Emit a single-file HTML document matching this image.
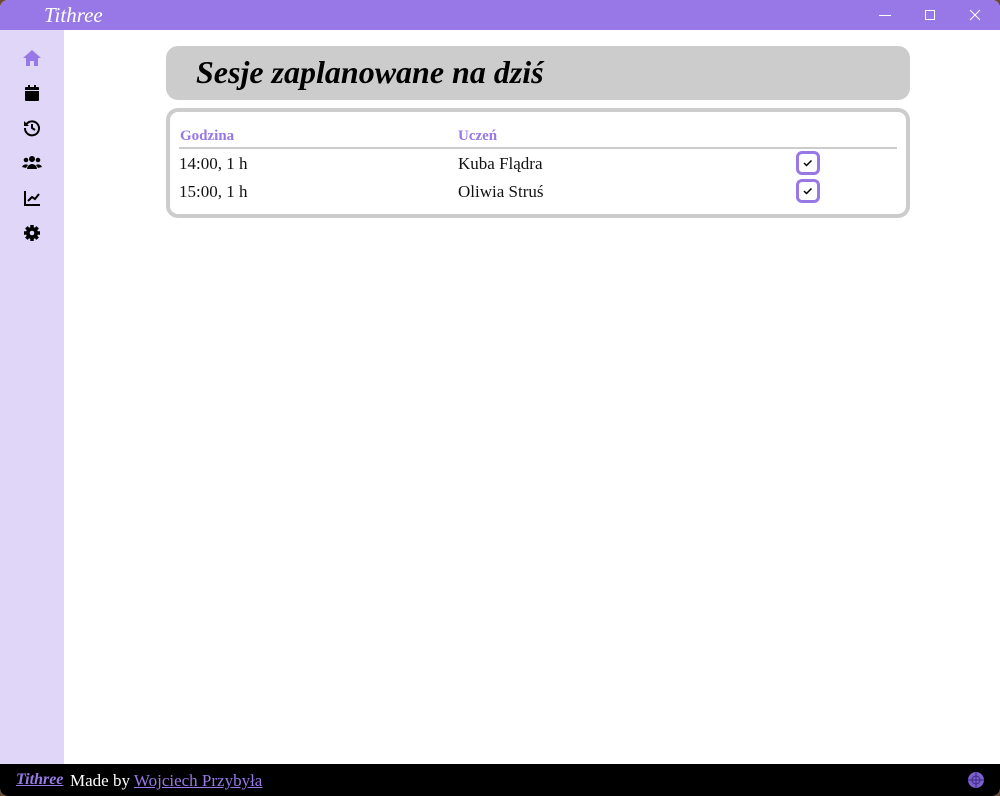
<!DOCTYPE html>
<html><head><meta charset="utf-8"><style>
*{margin:0;padding:0;box-sizing:border-box}
body{width:1000px;height:796px;background:#6b4a32;overflow:hidden;font-family:"Liberation Serif",serif;position:relative}
.win{position:absolute;left:0;top:0;width:1000px;height:796px;border-radius:8px;overflow:hidden;background:#fff}
.title{position:absolute;left:0;top:0;width:1000px;height:30px;background:#9878e6}
.title .t{position:absolute;left:44px;top:3px;color:#fff;font-style:italic;font-size:21px;font-family:"Liberation Serif",serif}
.side{position:absolute;left:0;top:30px;width:64px;height:734px;background:#e0d6f8}
.ic{position:absolute;left:22px;width:20px;height:20px}
.foot{position:absolute;left:0;top:764px;width:1000px;height:32px;background:#000;color:#fff;font-size:17px}
.head{position:absolute;left:166px;top:46px;width:744px;height:54px;background:#ccc;border-radius:12px}
.head span{position:absolute;left:30px;top:8px;font-size:32px;font-style:italic;font-weight:bold;color:#000}
.tbl{position:absolute;left:166px;top:108px;width:744px;height:110px;border:4px solid #ccc;border-radius:12px}
.tx{position:absolute;font-size:17px;color:#111}
.th{color:#9878e6;font-weight:bold;font-size:15px}
.line{position:absolute;left:9px;top:35px;width:718px;height:2px;background:#ccc}
.cb{position:absolute;left:626px;width:24px;height:24px;border:3px solid #9878e6;border-radius:6px}
</style></head><body><div class="win">
<div class="title"><span class="t">Tithree</span>
<svg style="position:absolute;left:878px;top:9px" width="14" height="12"><path d="M1 6.5H13" stroke="#fff" stroke-width="1"/></svg>
<svg style="position:absolute;left:924px;top:9px" width="12" height="12"><rect x="1.5" y="1.5" width="9" height="9" fill="none" stroke="#fff"/></svg>
<svg style="position:absolute;left:969px;top:9px" width="12" height="12"><path d="M1 1L11 11M11 1L1 11" stroke="#fff"/></svg>
</div>
<div class="side">
<svg class="ic" style="top:18px" viewBox="0 0 20 20"><path d="M10 2L1 10h3v8h4v-5h4v5h4v-8h3z" fill="#9878e6"/></svg>
<svg class="ic" style="top:53px" viewBox="0 0 20 20"><rect x="3" y="4" width="14" height="14" rx="1" fill="#000"/><rect x="6" y="2" width="2" height="4" fill="#000"/><rect x="12" y="2" width="2" height="4" fill="#000"/><rect x="3" y="7" width="14" height="1" fill="#e0d6f8"/></svg>
<svg class="ic" style="top:88px" viewBox="0 0 20 20"><path d="M4.5 6A7 7 0 1 1 3 10" fill="none" stroke="#000" stroke-width="2"/><path d="M2 3v5h5z" fill="#000"/><path d="M10 6v4l3 2" fill="none" stroke="#000" stroke-width="2"/></svg>
<svg class="ic" style="top:123px" viewBox="0 0 20 20"><circle cx="10" cy="6" r="3" fill="#000"/><circle cx="4" cy="7" r="2.3" fill="#000"/><circle cx="16" cy="7" r="2.3" fill="#000"/><path d="M5 16a5 5 0 0 1 10 0z" fill="#000"/><path d="M0 14a4 3.5 0 0 1 6-2l-2 3z M20 14a4 3.5 0 0 0-6-2l2 3z" fill="#000"/></svg>
<svg class="ic" style="top:158px" viewBox="0 0 20 20"><path d="M3 3v14h15" fill="none" stroke="#000" stroke-width="2"/><path d="M6 13l4-4 3 2 4-5" fill="none" stroke="#000" stroke-width="2"/></svg>
<svg class="ic" style="top:193px" viewBox="0 0 20 20"><circle cx="10" cy="10" r="6" fill="#000"/><g stroke="#000" stroke-width="3.5"><path d="M10 2v16M2 10h16M4.3 4.3l11.4 11.4M15.7 4.3L4.3 15.7"/></g><circle cx="10" cy="10" r="2.3" fill="#e0d6f8"/></svg>
</div>
<div class="head"><span>Sesje zaplanowane na dziś</span></div>
<div class="tbl">
<div class="tx th" style="left:10px;top:16px">Godzina</div>
<div class="tx th" style="left:288px;top:16px">Uczeń</div>
<div class="line"></div>
<div class="tx" style="left:9px;top:42px">14:00, 1 h</div>
<div class="tx" style="left:288px;top:42px">Kuba Flądra</div>
<div class="tx" style="left:9px;top:70px">15:00, 1 h</div>
<div class="tx" style="left:288px;top:70px">Oliwia Struś</div>
<div class="cb" style="top:39px"><svg width="18" height="18" style="position:absolute;left:0;top:0"><path d="M5 9l2.5 2.5L12.5 6.5" fill="none" stroke="#000" stroke-width="1.5"/></svg></div>
<div class="cb" style="top:67px"><svg width="18" height="18" style="position:absolute;left:0;top:0"><path d="M5 9l2.5 2.5L12.5 6.5" fill="none" stroke="#000" stroke-width="1.5"/></svg></div>
</div>
<div class="foot">
<span style="position:absolute;left:16px;top:7px;color:#9878e6;font-style:italic;font-weight:bold;text-decoration:underline;font-size:16px">Tithree</span>
<span style="position:absolute;left:70px;top:7px">Made by <span style="color:#9878e6;text-decoration:underline">Wojciech Przybyła</span></span>
<svg style="position:absolute;left:966px;top:6px" width="20" height="20"><circle cx="10" cy="10" r="8" fill="#7a5fd0"/><circle cx="10" cy="10" r="4" fill="none" stroke="#3a2a80"/><path d="M10 2v16M2 10h16" stroke="#3a2a80"/></svg>
</div>
</div></body></html>
